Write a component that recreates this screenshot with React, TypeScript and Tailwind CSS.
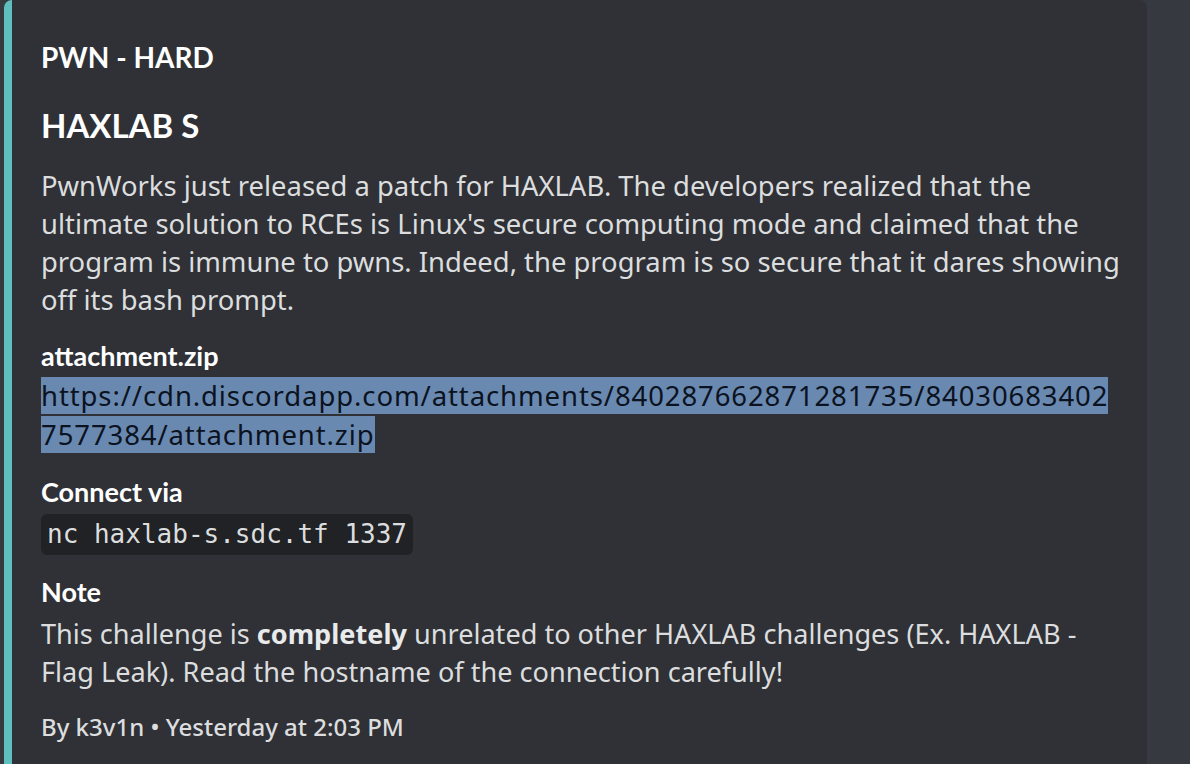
import React from 'react';

const heading = "font-['Lato','Noto_Sans',sans-serif]";
const body = "font-['Noto_Sans','Lato',sans-serif]";

function FieldName({ children, className = '' }: { children: React.ReactNode; className?: string }) {
  return <div className={`${heading} text-[27px] leading-[38px] font-bold text-white ${className}`}>{children}</div>;
}

export default function App() {
  return <div className={`min-h-screen w-full bg-[#36393f] overflow-hidden ${body}`}>
      <div className="flex w-[1143px] ml-[4px] min-h-[800px] rounded-l-[8px] rounded-tr-[8px] overflow-hidden bg-[#2f3136]">
        <div className="w-[8px] shrink-0 bg-[#5fbfbf]" />
        <div className="flex flex-col pl-[29px] pr-[32px] pt-[39px] pb-[40px] text-[#dcddde]">
          <div className={`${heading} text-[28px] leading-[36px] font-bold text-white`}>PWN - HARD</div>

          <div className={`${heading} mt-[30px] text-[33px] leading-[40px] font-bold text-white`}>HAXLAB S</div>

          <div className="mt-[22px] text-[27.4px] leading-[38px] whitespace-nowrap">
            PwnWorks just released a patch for HAXLAB. The developers realized that the<br />
            ultimate solution to RCEs is Linux's secure computing mode and claimed that the<br />
            program is immune to pwns. Indeed, the program is so secure that it dares showing<br />
            off its bash prompt.
          </div>

          <FieldName className="mt-[18px]">attachment.zip</FieldName>
          <div className="mt-[1px] text-[27.5px] leading-[39px] tracking-[0.9px] text-[#0b1220] whitespace-nowrap">
            <span className="bg-[#6a89b0]">https://cdn.discordapp.com/attachments/840287662871281735/84030683402</span><br />
            <span className="bg-[#6a89b0]">7577384/attachment.zip</span>
          </div>

          <FieldName className="mt-[19px]">Connect via</FieldName>
          <div className="mt-[3px] self-start rounded-[6px] bg-[#202225] px-[6px] h-[41px] flex items-center">
            <code className="font-['DejaVu_Sans_Mono',monospace] text-[26px] text-[#dcddde]">nc haxlab-s.sdc.tf 1337</code>
          </div>

          <FieldName className="mt-[18px]">Note</FieldName>
          <div className="mt-[4px] text-[27.1px] leading-[38px] whitespace-nowrap">
            This challenge is <strong className="font-bold text-[#e9eaeb]">completely</strong> unrelated to other HAXLAB challenges (Ex. HAXLAB -<br />
            Flag Leak). Read the hostname of the connection carefully!
          </div>

          <div className="mt-[20px] text-[24px] leading-[32px] font-medium text-[#dcddde] whitespace-nowrap">
            By k3v1n • Yesterday at 2:03 PM
          </div>
        </div>
      </div>
    </div>;
}
